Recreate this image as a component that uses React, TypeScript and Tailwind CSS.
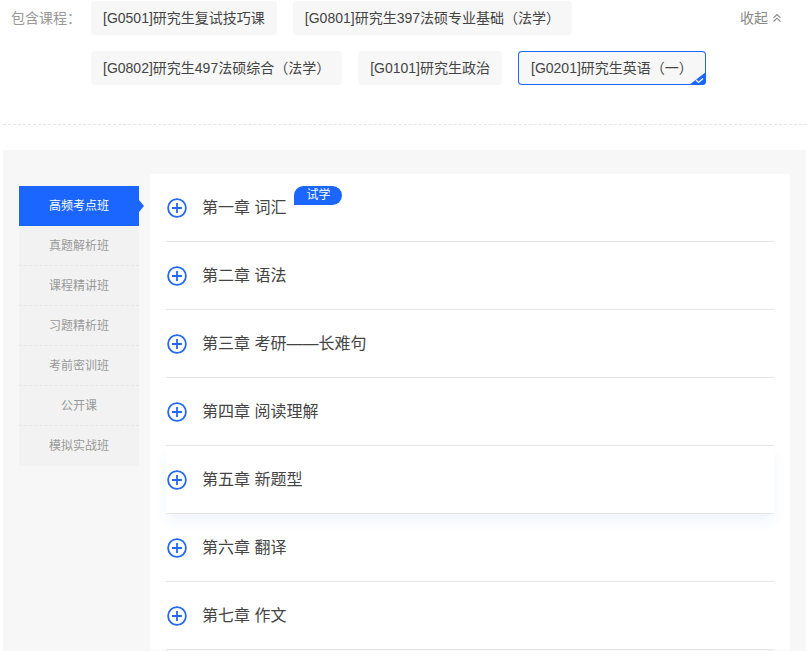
const courses = [
  { name: '[G0501]研究生复试技巧课' },
  { name: '[G0801]研究生397法硕专业基础（法学）' },
  { name: '[G0802]研究生497法硕综合（法学）' },
  { name: '[G0101]研究生政治' },
  { name: '[G0201]研究生英语（一）', active: true },
]

const tabs = ['高频考点班', '真题解析班', '课程精讲班', '习题精析班', '考前密训班', '公开课', '模拟实战班']

const chapters = ['第一章 词汇', '第二章 语法', '第三章 考研——长难句', '第四章 阅读理解', '第五章 新题型', '第六章 翻译', '第七章 作文']

function PlusIcon() {
  return (
    <svg width="20" height="20" viewBox="0 0 20 20" fill="none" stroke="#2468f2" strokeWidth="1.8" className="shrink-0">
      <circle cx="10" cy="10" r="8.9" />
      <path d="M10 5v10M5 10h10" />
    </svg>
  )
}

export default function App() {
  return (
    <div className="w-[807px] h-[651px] overflow-hidden bg-white text-[14px] font-['Liberation_Sans','Noto_Sans_CJK_SC',sans-serif]">
      {/* 包含课程 */}
      <div className="ml-[3px] h-[125px] pt-px border-b border-dashed border-[#e5e5e5] flex items-start">
        <div className="w-[88px] pl-2 h-[34px] leading-[34px] text-[#999] shrink-0">包含课程：</div>
        <div className="w-[640px] flex flex-wrap gap-x-4 gap-y-4">
          {courses.map(c => (
            <div
              key={c.name}
              className={`relative h-[34px] rounded bg-[#f7f7f7] leading-[34px] text-[#444] whitespace-nowrap ${c.active ? 'ring-1 ring-inset ring-[#1a66ff] px-[13px] overflow-hidden' : 'px-3'}`}
            >
              {c.name}
              {c.active && (
                <svg width="17" height="13" viewBox="0 0 17 13" className="absolute right-0 bottom-0">
                  <path d="M17 0V13H0Z" fill="#1a66ff" />
                  <path d="M7 8l2.5 2.4L14 6.5" fill="none" stroke="#fff" strokeWidth="1.3" />
                </svg>
              )}
            </div>
          ))}
        </div>
        <div className="ml-[9px] h-[34px] flex items-center gap-1 text-[#888] whitespace-nowrap">
          收起
          <svg width="10" height="10" viewBox="0 0 10 10" fill="none" stroke="#888" strokeWidth="1.1">
            <path d="M1.5 4.8L5 1.5l3.5 3.3M1.5 8.5L5 5.2l3.5 3.3" />
          </svg>
        </div>
      </div>

      <div className="ml-[3px] mt-[25px] w-[803px] h-[600px] bg-[#f7f7f7] pt-6 pl-4 flex items-start">
        <div className="relative mt-3 w-[120px] bg-[#f2f2f2] text-[12px] text-[#999] text-center shrink-0">
          {tabs.map((t, i) => (
            <div
              key={t}
              className={`h-10 leading-10 ${i === 0 ? 'bg-[#1a66ff] text-white' : ''} ${i > 0 && i < tabs.length - 1 ? 'border-b border-dashed border-[#e5e5e5]' : ''}`}
            >
              {t}
            </div>
          ))}
          <div className="absolute top-[14px] -right-[5px] w-0 h-0 border-y-[6px] border-y-transparent border-l-[5px] border-l-[#1a66ff]" />
        </div>
        <div className="ml-[11px] w-[640px] bg-white px-4">
          {chapters.map((c, i) => (
            <div
              key={c}
              className={`relative h-[68px] border-b border-[#e5e5e5] flex items-center gap-[15px] pl-[1px] text-[16px] text-[#444] ${i === 4 ? 'shadow-[0_8px_14px_-2px_rgba(40,90,160,0.08)]' : ''}`}
            >
              <PlusIcon />
              <span>{c}</span>
              {i === 0 && (
                <span className="ml-[-7px] mb-[24px] w-12 h-[19px] rounded-t-full rounded-br-full bg-[#1a66ff] text-white text-[12px] leading-[19px] text-center">
                  试学
                </span>
              )}
            </div>
          ))}
        </div>
      </div>
    </div>
  )
}
